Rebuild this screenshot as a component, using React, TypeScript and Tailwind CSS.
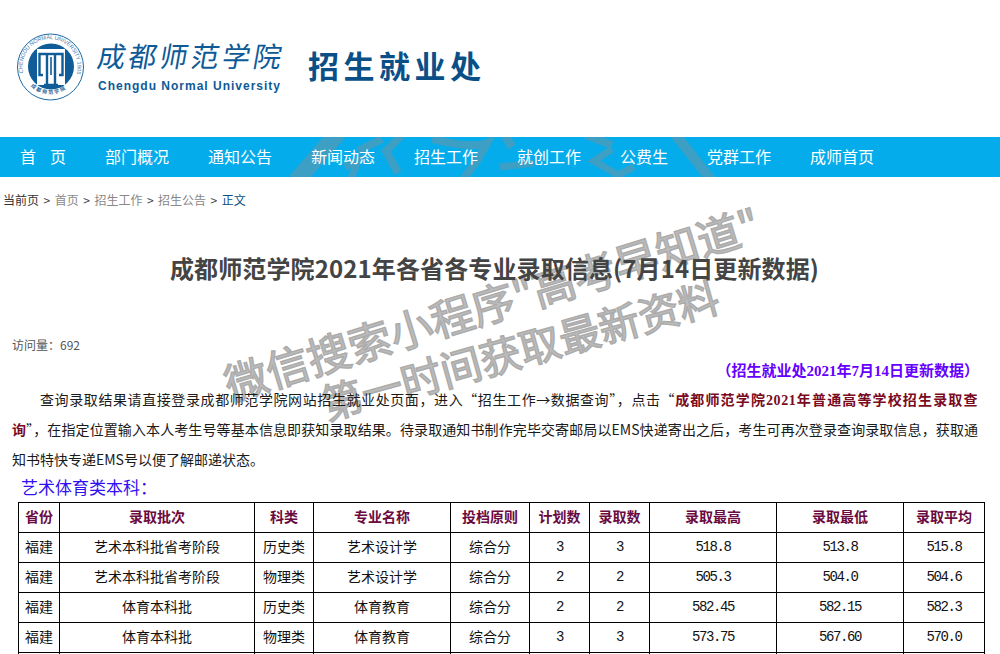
const navItems = ['部门概况', '通知公告', '新闻动态', '招生工作', '就创工作', '公费生', '党群工作', '成师首页'];

const crumbs = ['首页', '招生工作', '招生公告'];

const headers = ['省份', '录取批次', '科类', '专业名称', '投档原则', '计划数', '录取数', '录取最高', '录取最低', '录取平均'];

const rows = [
  ['福建', '艺术本科批省考阶段', '历史类', '艺术设计学', '综合分', '3', '3', '518.8', '513.8', '515.8'],
  ['福建', '艺术本科批省考阶段', '物理类', '艺术设计学', '综合分', '2', '2', '505.3', '504.0', '504.6'],
  ['福建', '体育本科批', '历史类', '体育教育', '综合分', '2', '2', '582.45', '582.15', '582.3'],
  ['福建', '体育本科批', '物理类', '体育教育', '综合分', '3', '3', '573.75', '567.60', '570.0'],
  ['', '', '', '', '', '', '', '', '', ''],
];

const Logo = () => (
  <svg width="90" height="80" viewBox="0 0 90 80" className="shrink-0" fontFamily="'Liberation Sans', 'Noto Sans CJK SC', sans-serif">
    <defs>
      <path id="seal-top" d="M 13.5 44 A 27.5 27.5 0 1 1 66.5 44" />
      <path id="seal-bottom" d="M 17 52 A 28 28 0 0 0 63 52" />
    </defs>
    <circle cx="40.5" cy="37" r="33" fill="none" stroke="#1c6aa3" strokeWidth="1" />
    <text fontSize="5.6" fill="#3f80b3">
      <textPath href="#seal-top" startOffset="1%" textLength="100" lengthAdjust="spacing">CHENGDU NORMAL UNIVERSITY 1905</textPath>
    </text>
    <text fontSize="5" fontWeight="700" fill="#1c5f96">
      <textPath href="#seal-bottom" startOffset="10%" textLength="38" lengthAdjust="spacing">成都师范学院</textPath>
    </text>
    <circle cx="41" cy="36.5" r="23" fill="#0f5c98" />
    <rect x="27" y="19" width="28" height="36" fill="#fff" />
    <path d="M36 24H29.5V45H33M46 24H52.5V45H49" fill="none" stroke="#0f5c98" strokeWidth="2.4" />
    <path d="M36 24H46" fill="none" stroke="#0f5c98" strokeWidth="2.4" />
    <path d="M37 25V54M45 25V54M34 55H48" fill="none" stroke="#0f5c98" strokeWidth="2.4" />
    <path d="M41 27V45" fill="none" stroke="#0f5c98" strokeWidth="1.6" />
  </svg>
);

// big faint watermark strokes that cross the nav bar
const NavWatermark = () => (
  <svg className="absolute inset-0 h-full w-full" viewBox="0 0 1000 40" fill="none" stroke="#3d9fc4">
    <path d="M296 44 L338 -4" strokeWidth="17" />
    <path d="M345 30 L358 24 L350 44" strokeWidth="7" />
    <path d="M358 14 L382 2" strokeWidth="8" />
    <path d="M402 -2 L386 14 L398 36" strokeWidth="8" />
    <path d="M432 2 Q470 12 487 6 L478 22 L462 44" strokeWidth="8" />
    <path d="M505 -2 L512 10" strokeWidth="9" />
    <path d="M500 30 L534 26" strokeWidth="7" />
    <path d="M586 -2 L612 8" strokeWidth="8" />
    <path d="M612 12 L594 24 L618 38 L634 30" strokeWidth="7" />
    <path d="M674 -4 L712 44" strokeWidth="10" />
  </svg>
);

const Num = ({ value }: { value: string }) => (
  <span className="font-['Liberation_Mono',monospace] tracking-[-1.4px]">{value}</span>
);

export default function App() {
  return (
    <div className="relative h-[654px] w-[1000px] overflow-hidden bg-white font-['Noto_Sans_CJK_SC',sans-serif]">
      {/* Header */}
      <header className="flex h-[137px] items-start pl-[10px] pt-[30px]">
        <Logo />
        <div className="ml-[-2px] flex w-[190px] flex-col pt-[7px] text-[#0e5a97]">
          <div className="flex h-[36px] w-[184px] skew-x-[-10deg] items-center justify-between text-[28px] leading-none">
            {['成', '都', '师', '范', '学', '院'].map((c) => (
              <span key={c}>{c}</span>
            ))}
          </div>
          <div className="mt-[5px] font-['Liberation_Sans',sans-serif] text-[12px] leading-[16px] font-bold tracking-[1px] whitespace-nowrap">
            Chengdu Normal University
          </div>
        </div>
        <div className="ml-[20px] pt-[13px] text-[31px] leading-[44px] font-bold tracking-[4.5px] text-[#0a5087]">招生就业处</div>
      </header>

      {/* Nav */}
      <nav className="relative flex h-[40px] items-center gap-[39px] bg-[#05aceb] pb-[2px] pl-[20px] text-[16px] text-white">
        <NavWatermark />
        <span className="relative flex w-[46px] justify-between">
          <span>首</span>
          <span>页</span>
        </span>
        {navItems.map((item) => (
          <span key={item} className="relative">{item}</span>
        ))}
      </nav>

      {/* Watermark */}
      <div className="absolute top-[358px] left-[225px] origin-left -rotate-[17deg] text-[43px] leading-[50px] whitespace-nowrap text-[#bcbcbc] [-webkit-text-stroke:1.5px_#acacac]">
        微信搜索小程序"高考早知道"
      </div>
      <div className="absolute top-[378px] left-[322px] origin-left -rotate-[15.5deg] text-[41px] leading-[50px] whitespace-nowrap text-[#bcbcbc] [-webkit-text-stroke:1.5px_#acacac]">
        第一时间获取最新资料
      </div>

      <main className="relative z-10">
        <div className="flex h-[46px] items-center gap-[4.5px] pl-[3px] text-[12px] text-[#888]">
          <span className="text-[#333]">当前页</span>
          {crumbs.map((c) => (
            <span key={c} className="flex items-center gap-[4.5px]">
              <span className="text-[#444]">&gt;</span>
              <span>{c}</span>
            </span>
          ))}
          <span className="text-[#444]">&gt;</span>
          <span className="text-[#0b4f80]">正文</span>
        </div>

        <h1 className="flex h-[90px] items-center justify-center pr-[11px] text-[24px] font-bold tracking-[0.12px] whitespace-nowrap text-[#444]">
          成都师范学院2021年各省各专业录取信息(7月14日更新数据)
        </h1>

        <div className="mt-[22px] h-[20px] pl-[12px] text-[12px] leading-[20px] text-[#555]">访问量：692</div>

        <div className="mt-[6px] h-[20px] pr-[21px] text-right font-['Liberation_Serif','Noto_Sans_CJK_SC',serif] text-[15px] leading-[20px] font-bold text-[#6600ff]">
          （招生就业处2021年7月14日更新数据）
        </div>

        <p className="mt-[4px] ml-[12px] w-[966px] text-[14px] leading-[29.3px] text-[#1a1a1a]">
          <span className="block indent-[28px] [text-align-last:justify]">
            查询录取结果请直接登录成都师范学院网站招生就业处页面，进入“招生工作→数据查询”，点击“
            <span className="font-['Liberation_Serif','Noto_Sans_CJK_SC',serif] font-bold tracking-[0.55px] text-[#7a0a1e]">成都师范学院2021年普通高等学校招生录取查</span>
          </span>
          <span className="block [text-align-last:justify]">
            <span className="font-bold text-[#7a0a1e]">询</span>
            ”，在指定位置输入本人考生号等基本信息即获知录取结果。待录取通知书制作完毕交寄邮局以EMS快递寄出之后，考生可再次登录查询录取信息，获取通
          </span>
          <span className="block">知书特快专递EMS号以便了解邮递状态。</span>
        </p>

        <div className="mt-[2px] h-[22px] pl-[21px] text-[17px] leading-[22px] text-[#3010f0]">艺术体育类本科：</div>

        <table className="mt-[4px] ml-[18px] w-[966px] table-fixed border-collapse border border-black text-center text-[14px] text-[#111]">
          <colgroup>
            <col className="w-[41px]" />
            <col className="w-[195px]" />
            <col className="w-[59px]" />
            <col className="w-[137px]" />
            <col className="w-[79px]" />
            <col className="w-[60px]" />
            <col className="w-[60px]" />
            <col className="w-[127px]" />
            <col className="w-[127px]" />
            <col className="w-[81px]" />
          </colgroup>
          <thead>
            <tr className="h-[30px]">
              {headers.map((h) => (
                <th key={h} className="border border-black p-0 pb-[2px] font-bold text-[#6a0a40]">{h}</th>
              ))}
            </tr>
          </thead>
          <tbody>
            {rows.map((row, i) => (
              <tr key={i} className="h-[30px]">
                {row.map((cell, j) => (
                  <td key={j} className="border border-black p-0 pb-[2px]">
                    {j >= 5 ? <Num value={cell} /> : cell}
                  </td>
                ))}
              </tr>
            ))}
          </tbody>
        </table>
      </main>
    </div>
  );
}
